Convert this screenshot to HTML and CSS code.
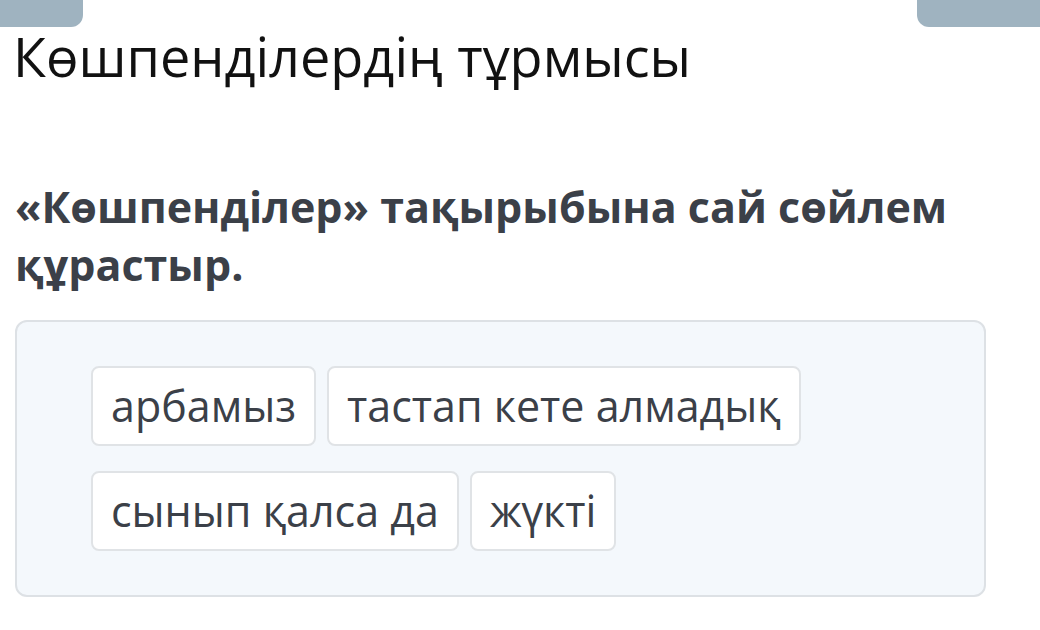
FILE: index.html
```html
<!DOCTYPE html>
<html lang="kk">
<head>
<meta charset="utf-8">
<link rel="stylesheet" href="styles.css">
</head>
<body>
<div class="topbar">
  <div class="tab tab-left"></div>
  <div class="tab tab-right"></div>
</div>
<h1 class="title">Көшпенділердің тұрмысы</h1>
<p class="question">«Көшпенділер» тақырыбына сай сөйлем құрастыр.</p>
<div class="board">
  <div class="row">
    <span class="chip">арбамыз</span>
    <span class="chip">тастап кете алмадық</span>
  </div>
  <div class="row">
    <span class="chip">сынып қалса да</span>
    <span class="chip">жүкті</span>
  </div>
</div>
</body>
</html>
```
FILE: styles.css
```css
html, body {
  margin: 0;
  padding: 0;
  background: #ffffff;
  width: 1040px;
  height: 630px;
  overflow: hidden;
  font-family: "Open Sans", "Noto Sans", sans-serif;
}
.topbar {
  display: flex;
  justify-content: space-between;
  height: 27px;
}
.tab {
  background: #9fb3c0;
  height: 27px;
}
.tab-left {
  width: 83px;
  border-bottom-right-radius: 12px;
}
.tab-right {
  width: 123px;
  border-bottom-left-radius: 12px;
}
.title {
  margin: 0;
  padding-left: 13px;
  font-weight: 400;
  font-size: 54px;
  line-height: 58px;
  color: #111111;
}
.question {
  margin: 93px 0 0 0;
  padding-left: 15px;
  width: 1000px;
  font-weight: 700;
  font-size: 43px;
  line-height: 58px;
  color: #3b4048;
}
.board {
  margin: 26px 0 0 15px;
  width: 971px;
  box-sizing: border-box;
  border: 2px solid #dde1e5;
  border-radius: 12px;
  background: #f4f8fc;
  padding: 44px 0 44px 74px;
  display: flex;
  flex-direction: column;
  gap: 25px;
}
.row {
  display: flex;
  gap: 11px;
}
.chip {
  display: inline-block;
  background: #ffffff;
  border: 2px solid #e0e3e6;
  border-radius: 8px;
  padding: 0 18px;
  height: 80px;
  box-sizing: border-box;
  line-height: 76px;
  font-size: 43px;
  color: #3b4048;
}
```
